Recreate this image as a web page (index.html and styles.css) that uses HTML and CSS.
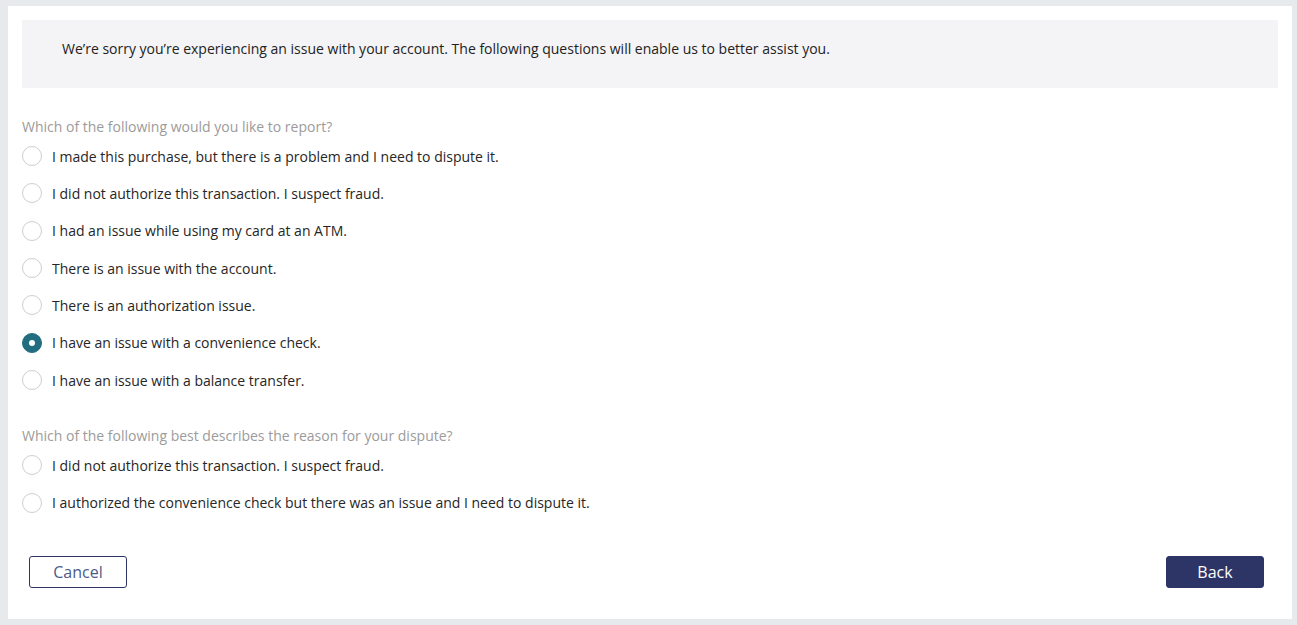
FILE: index.html
```html
<!DOCTYPE html>
<html lang="en">
<head>
  <meta charset="UTF-8">
  <meta name="viewport" content="width=device-width, initial-scale=1.0">
  <title>Report an issue</title>
  <link rel="stylesheet" href="styles.css">
</head>
<body>
  <div class="panel">
    <div class="intro">We’re sorry you’re experiencing an issue with your account. The following questions will enable us to better assist you.</div>

    <div class="question">
      <div class="question-label">Which of the following would you like to report?</div>
      <label class="option"><input type="radio" name="report"><span class="dot"></span>I made this purchase, but there is a problem and I need to dispute it.</label>
      <label class="option"><input type="radio" name="report"><span class="dot"></span>I did not authorize this transaction. I suspect fraud.</label>
      <label class="option"><input type="radio" name="report"><span class="dot"></span>I had an issue while using my card at an ATM.</label>
      <label class="option"><input type="radio" name="report"><span class="dot"></span>There is an issue with the account.</label>
      <label class="option"><input type="radio" name="report"><span class="dot"></span>There is an authorization issue.</label>
      <label class="option"><input type="radio" name="report" checked><span class="dot"></span>I have an issue with a convenience check.</label>
      <label class="option"><input type="radio" name="report"><span class="dot"></span>I have an issue with a balance transfer.</label>
    </div>

    <div class="question">
      <div class="question-label">Which of the following best describes the reason for your dispute?</div>
      <label class="option"><input type="radio" name="reason"><span class="dot"></span>I did not authorize this transaction. I suspect fraud.</label>
      <label class="option"><input type="radio" name="reason"><span class="dot"></span>I authorized the convenience check but there was an issue and I need to dispute it.</label>
    </div>

    <div class="actions">
      <button class="btn btn-outline">Cancel</button>
      <button class="btn btn-primary">Back</button>
    </div>
  </div>
</body>
</html>
```

FILE: styles.css
```css
body {
  margin: 0;
  padding: 6px 5px 6px 8px;
  background: #e6eaed;
  font-family: "Open Sans", "Liberation Sans", sans-serif;
  font-size: 14px;
  color: #262626;
}
.panel {
  background: #fff;
  padding: 14px 14px 31px;
}
.intro {
  background: #f4f4f6;
  height: 68px;
  box-sizing: border-box;
  padding: 19px 0 0 40px;
  line-height: 20px;
  font-size: 14px;
  color: #222;
}
.question { margin-top: 29px; }
.question + .question { margin-top: 28px; }
.question-label {
  line-height: 20px;
  color: #9b9b9b;
}
.option {
  display: flex;
  align-items: center;
  height: 37.33px;
  padding-top: 1px;
  box-sizing: border-box;
  cursor: pointer;
}
.option input { display: none; }
.dot {
  width: 18px;
  height: 18px;
  border: 1px solid #c9ced3;
  border-radius: 50%;
  margin-right: 10px;
  box-sizing: content-box;
  position: relative;
}
.option input:checked + .dot {
  background: #226d80;
  border-color: #226d80;
}
.option input:checked + .dot::after {
  content: "";
  position: absolute;
  left: 6px;
  top: 6px;
  width: 6px;
  height: 6px;
  border-radius: 50%;
  background: #fff;
}
.actions {
  display: flex;
  justify-content: space-between;
  margin-top: 34.67px;
  padding: 0 14px 0 7px;
}
.btn {
  width: 98px;
  height: 32px;
  border-radius: 3px;
  font-family: inherit;
  font-size: 16px;
  cursor: pointer;
}
.btn-outline {
  background: #fff;
  border: 1px solid #2d3566;
  color: #4c5a8c;
}
.btn-primary {
  background: #2d3566;
  border: 1px solid #2d3566;
  color: #fff;
}
```
